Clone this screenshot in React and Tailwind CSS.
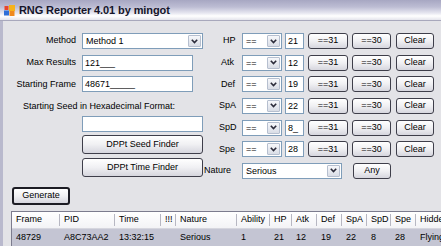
import React from 'react';

const font = { fontFamily: '"Liberation Sans", Arial, sans-serif' };

function Chevron() {
  return (
    <svg width="7" height="5" viewBox="0 0 7 5">
      <path d="M0.8 0.8 L3.5 3.6 L6.2 0.8" fill="none" stroke="#2b2b3a" strokeWidth="1.6" />
    </svg>
  );
}

function Combo({ value, w }) {
  return (
    <div className={`${w} h-[16px] flex items-stretch bg-white border border-[#7f9db9]`}>
      <div className="flex-1 pl-[3px] leading-[14px] overflow-hidden whitespace-nowrap">{value}</div>
      <div className="w-[13px] m-[1px] flex items-center justify-center border border-[#b6bfcf] rounded-[1px] bg-gradient-to-b from-[#f7f8fb] to-[#d9dde6]">
        <Chevron />
      </div>
    </div>
  );
}

function TextBox({ value, w }) {
  return (
    <div className={`${w} h-[16px] bg-white border border-[#7f9db9] pl-[2px] leading-[14px] whitespace-nowrap overflow-hidden`}>
      {value}
    </div>
  );
}

function Btn({ label, w, h = 'h-[16px]', strong }) {
  return (
    <div
      className={`${w} ${h} flex items-center justify-center rounded-[3px] bg-gradient-to-b from-[#ffffff] via-[#f0f0f3] to-[#d6d6de] ${
        strong ? 'border-2 border-[#1c1c24]' : 'border border-[#3e3e4a]'
      }`}
    >
      {label}
    </div>
  );
}

const stats = [
  { name: 'HP', val: '21', pl: 'pl-[19px]' },
  { name: 'Atk', val: '12', pl: 'pl-[17px]' },
  { name: 'Def', val: '19', pl: 'pl-[17px]' },
  { name: 'SpA', val: '22', pl: 'pl-[15px]' },
  { name: 'SpD', val: '8_', pl: 'pl-[15px]' },
  { name: 'Spe', val: '28', pl: 'pl-[15px]' },
];

const columns = [
  { h: 'Frame', d: '48729', w: 'w-[48px]' },
  { h: 'PID', d: 'A8C73AA2', w: 'w-[55px]' },
  { h: 'Time', d: '13:32:15', w: 'w-[46px]' },
  { h: '!!!', d: '', w: 'w-[15px]' },
  { h: 'Nature', d: 'Serious', w: 'w-[61px]' },
  { h: 'Ability', d: '1', w: 'w-[33px]' },
  { h: 'HP', d: '21', w: 'w-[22px]' },
  { h: 'Atk', d: '12', w: 'w-[25px]' },
  { h: 'Def', d: '19', w: 'w-[25px]' },
  { h: 'SpA', d: '22', w: 'w-[25px]' },
  { h: 'SpD', d: '8', w: 'w-[24px]' },
  { h: 'Spe', d: '28', w: 'w-[25px]' },
  { h: 'Hidden Power', d: 'Flying', w: 'w-[70px]' },
];

export default function App() {
  return (
    <div className="w-[441px] h-[246px] overflow-hidden bg-[#e3e3e7] text-[9px] text-black" style={font}>
      {/* Title bar */}
      <div className="h-[21px] flex items-center pl-[4px] border-b border-[#a8a8bc] bg-[linear-gradient(to_bottom,#a7a7c2_0%,#bdbdd4_35%,#e6e6f0_65%,#ffffff_80%,#e4e4ec_100%)]">
        <svg width="11" height="11" viewBox="0 0 11 11">
          <rect x="0.5" y="1" width="4" height="4" fill="#e8452c" />
          <rect x="5" y="0" width="6" height="6" fill="#f6b21c" />
          <rect x="0" y="5.5" width="5" height="5" fill="#2f6fd8" />
          <rect x="5.5" y="6" width="5" height="5" fill="#f08a20" />
        </svg>
        <span className="ml-[4px] text-[11px] font-bold text-[#15152a] tracking-[-0.1px]">RNG Reporter 4.01 by mingot</span>
      </div>

      {/* Body */}
      <div className="border-l-[3px] border-[#b9b9cd] h-[225px]">
        <div className="flex pt-[12px]">
          {/* Left column */}
          <div className="w-[201px] flex flex-col">
            <div className="flex flex-col gap-[5.67px]">
              <div className="flex items-center">
                <div className="w-[73px] text-right">Method</div>
                <div className="ml-[6px]">
                  <Combo value="Method 1" w="w-[121px]" />
                </div>
              </div>
              <div className="flex items-center">
                <div className="w-[73px] text-right">Max Results</div>
                <div className="ml-[6px]">
                  <TextBox value="121___" w="w-[111px]" />
                </div>
              </div>
              <div className="flex items-center">
                <div className="w-[73px] text-right">Starting Frame</div>
                <div className="ml-[6px]">
                  <TextBox value="48671_____" w="w-[111px]" />
                </div>
              </div>
            </div>
            <div className="mt-[8px] h-[12px] leading-[12px] pl-[20px]">Starting Seed in Hexadecimal Format:</div>
            <div className="mt-[4px] ml-[79px]">
              <TextBox value="" w="w-[121px]" />
            </div>
            <div className="mt-[3px] ml-[79px]">
              <Btn label="DPPt Seed Finder" w="w-[121px]" h="h-[19px]" />
            </div>
            <div className="mt-[4px] ml-[79px]">
              <Btn label="DPPt Time Finder" w="w-[121px]" h="h-[19px]" />
            </div>
          </div>

          {/* Right column */}
          <div className="flex flex-col gap-[5.67px]">
            {stats.map((s) => (
              <div key={s.name} className="flex items-center h-[16px]">
                <div className={`w-[38px] ${s.pl}`}>{s.name}</div>
                <Combo value="==" w="w-[40px]" />
                <div className="ml-[3px]">
                  <TextBox value={s.val} w="w-[19px]" />
                </div>
                <div className="ml-[4px]">
                  <Btn label="==31" w="w-[40px]" />
                </div>
                <div className="ml-[4px]">
                  <Btn label="==30" w="w-[39px]" />
                </div>
                <div className="ml-[5px]">
                  <Btn label="Clear" w="w-[38px]" />
                </div>
              </div>
            ))}
            <div className="flex items-center h-[16px]">
              <div className="w-[38px]">Nature</div>
              <Combo value="Serious" w="w-[100px]" />
              <div className="ml-[11px]">
                <Btn label="Any" w="w-[38px]" />
              </div>
            </div>
          </div>
        </div>

        <div className="mt-[8px] ml-[9px]">
          <Btn label="Generate" w="w-[58px]" h="h-[18px]" strong />
        </div>

        {/* Results grid */}
        <div className="mt-[6px] ml-[8px] border-t border-l border-[#7c7c8e] w-[600px]">
          <div className="flex h-[17px] bg-gradient-to-b from-[#ffffff] to-[#f3f3f6] border-b border-[#d6d6de]">
            {columns.map((c) => (
              <div key={c.h} className={`${c.w} shrink-0 flex items-center border-r border-[#b7b7c2] pl-[4px] whitespace-nowrap my-[2px]`}>
                {c.h}
              </div>
            ))}
          </div>
          <div className="flex h-[18px] bg-[#c4c5d3]">
            {columns.map((c) => (
              <div key={c.h} className={`${c.w} shrink-0 flex items-center pl-[4px] whitespace-nowrap`}>
                {c.d}
              </div>
            ))}
          </div>
        </div>
      </div>
    </div>
  );
}
